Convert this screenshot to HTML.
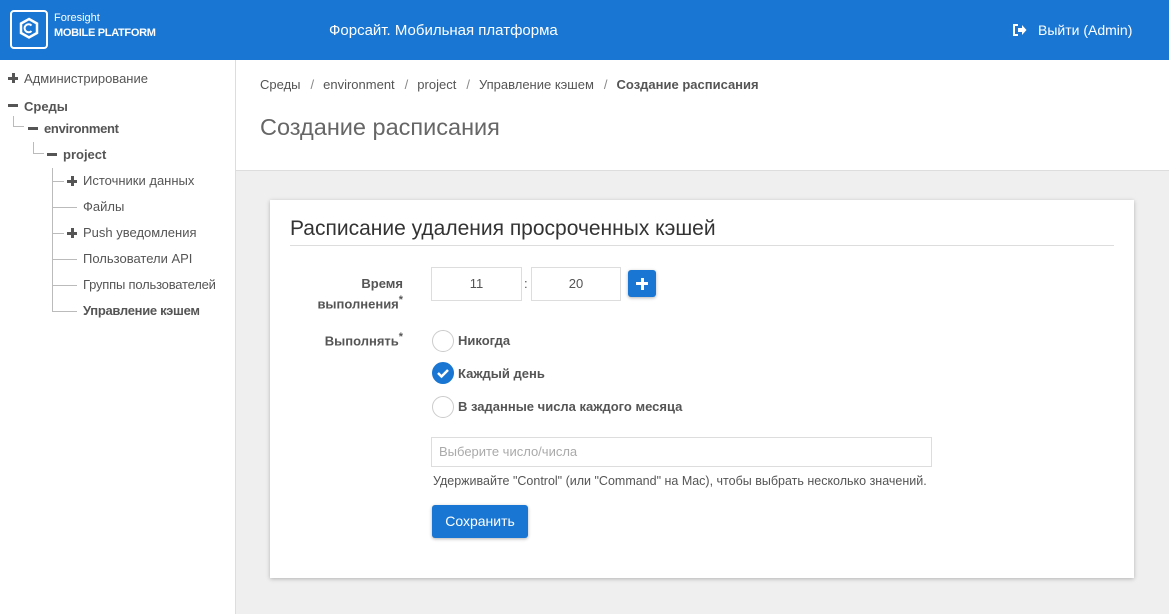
<!DOCTYPE html>
<html><head><meta charset="utf-8"><style>
*{box-sizing:border-box;margin:0;padding:0}
body{width:1169px;height:614px;overflow:hidden;font-family:"Liberation Sans",sans-serif;background:#efefef;position:relative;color:#555}
.hdr{position:absolute;left:0;top:0;width:1169px;height:60px;background:#1976d2;color:#fff}
.side{position:absolute;left:0;top:60px;width:236px;height:554px;background:#fff;border-right:1px solid #ddd}
.t{position:absolute;font-size:13px;color:#555;white-space:nowrap}
.b{font-weight:bold}
.ln{position:absolute;background:#bbb}
.pl,.mi{position:absolute;width:10px;height:10px}
.pl:before,.mi:before{content:"";position:absolute;left:0;top:4px;width:10px;height:3px;background:#555}
.pl:after{content:"";position:absolute;left:3.5px;top:0;width:3px;height:10px;background:#555}
.top{position:absolute;left:236px;top:60px;width:933px;height:111px;background:#fff;border-bottom:1px solid #ddd}
.sep{padding:0 9px 0 10px;color:#888}
.card{position:absolute;left:270px;top:200px;width:864px;height:378px;background:#fff;box-shadow:0 1px 4px rgba(0,0,0,.25)}
.inp{position:absolute;border:1px solid #ddd;background:#fff;font-size:13px;color:#555;text-align:center;line-height:32px}
.rad{position:absolute;width:22px;height:22px;border-radius:50%;border:1px solid #ccc;background:#fff}
</style></head><body>
<div class="hdr">
<svg style="position:absolute;left:10px;top:10px" width="38" height="40" viewBox="0 0 38 40"><rect x="1" y="1" width="36" height="37" rx="3" fill="none" stroke="#fff" stroke-width="2"/><path d="M19 9L27 13.5V23L19 27.5L11 23V13.5Z" fill="none" stroke="#fff" stroke-width="2.5"/><path d="M21.5 15.5A4 4 0 1 0 21.5 21" fill="none" stroke="#fff" stroke-width="2"/></svg>
<div class="t" style="left:54px;top:12px;color:#fff;font-size:11px">Foresight</div>
<div class="t b" style="left:54px;top:27px;color:#fff;font-size:11px;letter-spacing:-0.3px">MOBILE PLATFORM</div>
<div class="t" style="left:329px;top:22px;color:#fff;font-size:15px">Форсайт. Мобильная платформа</div>
<svg style="position:absolute;left:1013px;top:24px" width="14" height="12" viewBox="0 0 14 12"><path d="M5 1H1V11H5" fill="none" stroke="#fff" stroke-width="2"/><path d="M5 4H9V1L13.5 6L9 11V8H5Z" fill="#fff"/></svg>
<div class="t" style="left:1038px;top:22px;color:#fff;font-size:14px">Выйти (Admin)</div>
</div>
<div class="side">
<div class="pl" style="left:8px;top:13px"></div><div class="t" style="left:24px;top:11px">Администрирование</div>
<div class="mi" style="left:8px;top:40px"></div><div class="t b" style="left:24px;top:39px">Среды</div>
<div class="ln" style="left:13px;top:56px;width:1px;height:10px"></div><div class="ln" style="left:13px;top:66px;width:11px;height:1px"></div>
<div class="mi" style="left:28px;top:63px"></div><div class="t b" style="left:44px;top:61px;letter-spacing:-0.3px">environment</div>
<div class="ln" style="left:33px;top:82px;width:1px;height:11px"></div><div class="ln" style="left:33px;top:93px;width:11px;height:1px"></div>
<div class="mi" style="left:47px;top:89px"></div><div class="t b" style="left:63px;top:87px">project</div>
<div class="ln" style="left:52px;top:108px;width:1px;height:143px"></div>
<div class="ln" style="left:52px;top:121px;width:12px;height:1px"></div><div class="pl" style="left:67px;top:116px"></div><div class="t" style="left:83px;top:113px">Источники данных</div>
<div class="ln" style="left:52px;top:147px;width:25px;height:1px"></div><div class="t" style="left:83px;top:139px">Файлы</div>
<div class="ln" style="left:52px;top:173px;width:12px;height:1px"></div><div class="pl" style="left:67px;top:168px"></div><div class="t" style="left:83px;top:165px">Push уведомления</div>
<div class="ln" style="left:52px;top:199px;width:25px;height:1px"></div><div class="t" style="left:83px;top:191px">Пользователи API</div>
<div class="ln" style="left:52px;top:225px;width:25px;height:1px"></div><div class="t" style="left:83px;top:217px;letter-spacing:-0.2px">Группы пользователей</div>
<div class="ln" style="left:52px;top:251px;width:25px;height:1px"></div><div class="t b" style="left:83px;top:243px;letter-spacing:-0.3px">Управление кэшем</div>
</div>
<div class="top">
<div class="t" style="left:24px;top:17px">Среды<span class="sep">/</span>environment<span class="sep">/</span>project<span class="sep">/</span>Управление кэшем<span class="sep">/</span><b>Создание расписания</b></div>
<div class="t" style="left:24px;top:54px;font-size:23.5px;color:#666">Создание расписания</div>
</div>
<div class="card">
<div class="t" style="left:20px;top:17px;font-size:21px;color:#333">Расписание удаления просроченных кэшей</div>
<div style="position:absolute;left:20px;top:45px;width:824px;height:1px;background:#ddd"></div>
<div class="t b" style="left:0;width:133px;text-align:right;top:75px;line-height:17px;white-space:normal">Время<br>выполнения<sup>*</sup></div>
<div class="inp" style="left:161px;top:67px;width:91px;height:34px">11</div>
<div class="t" style="left:254px;top:76px">:</div>
<div class="inp" style="left:261px;top:67px;width:90px;height:34px">20</div>
<div style="position:absolute;left:358px;top:70px;width:28px;height:27px;background:#1976d2;border-radius:3px;box-shadow:0 1px 3px rgba(0,0,0,.3)"><div style="position:absolute;left:8px;top:12px;width:12px;height:3px;background:#fff"></div><div style="position:absolute;left:12.5px;top:7.5px;width:3px;height:12px;background:#fff"></div></div>
<div class="t b" style="left:0;width:133px;text-align:right;top:131px">Выполнять<sup>*</sup></div>
<div class="rad" style="left:162px;top:130px"></div><div class="t b" style="left:188px;top:133px">Никогда</div>
<div class="rad" style="left:162px;top:162px;background:#1976d2;border-color:#1976d2"><svg width="20" height="20" viewBox="0 0 20 20"><path d="M5 10L8.5 13.5L15 7" fill="none" stroke="#fff" stroke-width="2.5"/></svg></div><div class="t b" style="left:188px;top:166px">Каждый день</div>
<div class="rad" style="left:162px;top:196px"></div><div class="t b" style="left:188px;top:199px">В заданные числа каждого месяца</div>
<div class="inp" style="left:161px;top:237px;width:501px;height:30px;text-align:left;padding-left:7px;line-height:28px;color:#aaa">Выберите число/числа</div>
<div class="t" style="left:163px;top:274px;font-size:12.5px">Удерживайте "Control" (или "Command" на Mac), чтобы выбрать несколько значений.</div>
<div style="position:absolute;left:162px;top:305px;width:96px;height:33px;background:#1976d2;border-radius:3px;box-shadow:0 1px 3px rgba(0,0,0,.3);color:#fff;font-size:14px;text-align:center;line-height:33px">Сохранить</div>
</div>
</body></html>
